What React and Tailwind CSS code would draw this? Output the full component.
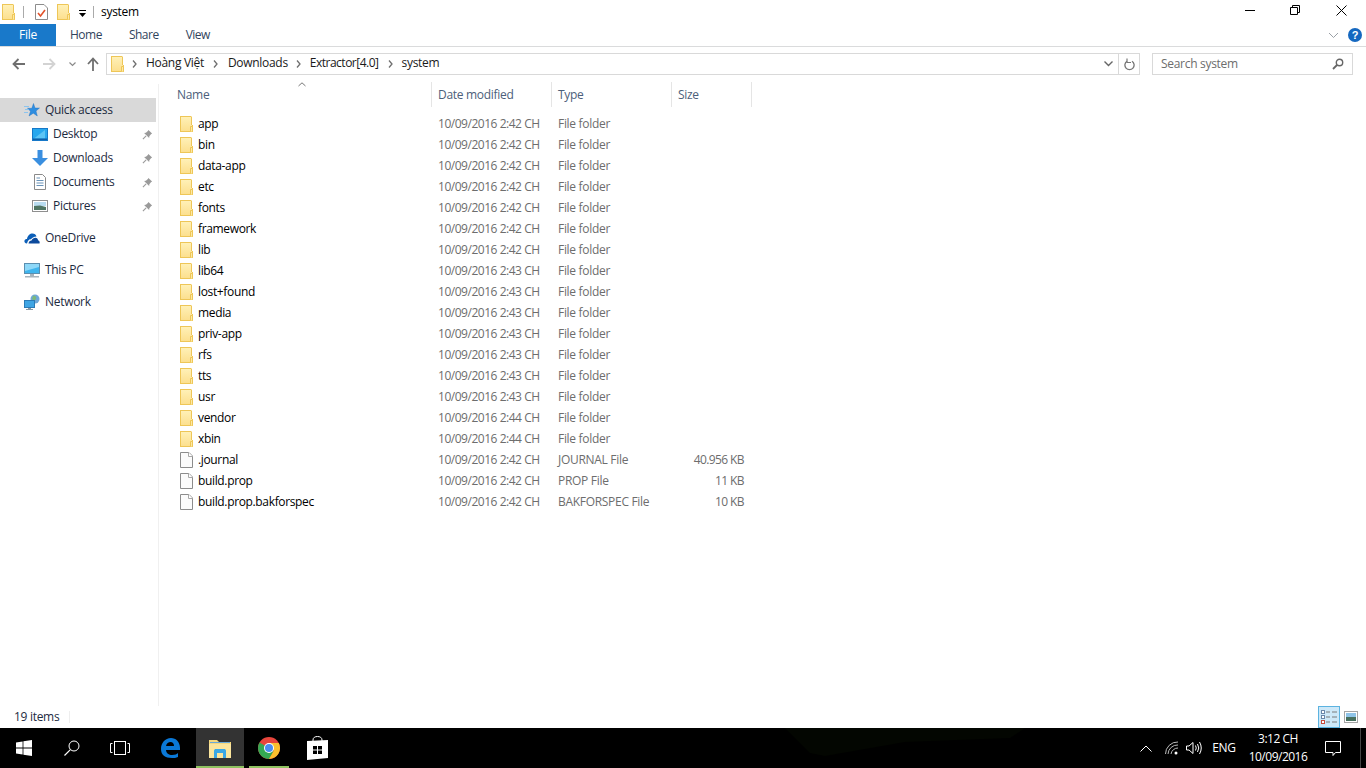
import React from "react";

const Folder = ({ className = "" }) => (
  <svg width="13" height="16" viewBox="0 0 13 16" className={className}>
    <defs>
      <linearGradient id="fg" x1="0" y1="0" x2="0" y2="1">
        <stop offset="0" stopColor="#fff1b8" />
        <stop offset="1" stopColor="#fcdf8e" />
      </linearGradient>
    </defs>
    <rect x="0.5" y="0.5" width="12" height="15" fill="url(#fg)" stroke="#eec657" />
    <rect x="11" y="0" width="2" height="9" fill="#fff" />
    <path d="M11.5 0.5V9" stroke="#eec657" />
    <path d="M10.5 15.5V10.5H12.5V15.5" fill="#fde9a4" stroke="#eec657" />
  </svg>
);

const FileIcon = () => (
  <svg width="13" height="16" viewBox="0 0 13 16">
    <path d="M0.5 0.5H9L12.5 4V15.5H0.5Z" fill="#fbfbfb" stroke="#8c8c8c" />
    <path d="M8.5 0.5V4.5H12.5" fill="#fff" stroke="#a8a8a8" />
  </svg>
);

const Pin = () => (
  <svg width="11" height="11" viewBox="0 0 12 12" className="ml-auto mr-[3px]">
    <path d="M7 1L11 5L9.8 5.6L8 7.8L7.8 9.8L2.3 4.3L4.3 4.1L6.4 2.2Z" fill="#9a9a9a" />
    <path d="M4.5 7.5L1 11" stroke="#9a9a9a" strokeWidth="1.2" />
  </svg>
);

const NavIcon = ({ type }) => {
  if (type === "star")
    return (
      <svg width="16" height="14" viewBox="0 0 16 14">
        <path d="M9.5 0.5L11 5H15.5L12 8L13.3 13L9.3 10.2L5 13L6.5 8.2L3.5 5.3H7.8Z" fill="#2f8ee0" stroke="#1f6fc0" strokeWidth="0.4" />
        <path d="M0 3.5H5M1 6.5H4.5M0 9.5H4" stroke="#8cc4ee" />
      </svg>
    );
  if (type === "desktop")
    return (
      <svg width="16" height="13" viewBox="0 0 16 13">
        <rect x="0.5" y="0.5" width="15" height="12" fill="#27a7ee" stroke="#1678c8" />
        <path d="M2 10.5L13 2V10.5Z" fill="#5cc4f5" />
        <rect x="1" y="10.5" width="14" height="1.5" fill="#0f5fa8" />
      </svg>
    );
  if (type === "down")
    return (
      <svg width="16" height="16" viewBox="0 0 16 16">
        <path d="M5.5 0H10.5V8H16L8 16L0 8H5.5Z" fill="#3a8fe0" />
      </svg>
    );
  if (type === "doc")
    return (
      <svg width="12" height="16" viewBox="0 0 12 16">
        <path d="M0.5 0.5H8.5L11.5 3.5V15.5H0.5Z" fill="#fff" stroke="#8a8a8a" />
        <path d="M2.5 4H6M2.5 6.5H9.5M2.5 9H9.5M2.5 11.5H9.5" stroke="#6a93b8" />
      </svg>
    );
  if (type === "pic")
    return (
      <svg width="16" height="12" viewBox="0 0 16 12">
        <rect x="0.5" y="0.5" width="15" height="11" fill="#fff" stroke="#8f8f8f" />
        <rect x="2" y="2" width="12" height="4" fill="#b9dcf0" />
        <path d="M2 6L8 5.5L14 7V10H2Z" fill="#4f7563" />
      </svg>
    );
  if (type === "cloud")
    return (
      <svg width="16" height="11" viewBox="0 0 16 11">
        <path d="M3 10.5C1 10.5 0 9 0.5 7.5C1 6.3 2.2 6 3 6C3.5 2.5 6 0.5 8.5 0.5C10.5 0.5 12 1.6 12.5 3.5C10 3.5 7.5 5 6.8 6.5C6 6 4 6.5 3 10.5Z" fill="#0c5fb8" />
        <path d="M4.5 10.5C4.8 8.5 6 7.5 7.5 7.5C8.5 5.5 10.5 4.5 12.3 5C13.5 5.3 14 6.5 14 7.2C15.5 7.5 16 9 15.5 10.5Z" fill="#0c4a9c" />
      </svg>
    );
  if (type === "pc")
    return (
      <svg width="16" height="15" viewBox="0 0 16 15">
        <rect x="0.5" y="0.5" width="15" height="10" fill="#3fb5ee" stroke="#5a8fb0" />
        <path d="M1 1H15V4L1 8Z" fill="#8ed8f8" />
        <rect x="6" y="11" width="4" height="2" fill="#a8b4bc" />
        <rect x="1" y="13" width="14" height="1.5" fill="#a8b4bc" />
      </svg>
    );
  return (
    <svg width="16" height="16" viewBox="0 0 16 16">
      <circle cx="11" cy="5" r="4.5" fill="#6fa8d8" />
      <path d="M9 2C11 1 13 3 12 5C11 7 9 6 8 5Z" fill="#7db97a" />
      <rect x="0.5" y="6.5" width="10" height="7" fill="#3fa5e4" stroke="#2c7bb5" />
      <rect x="4" y="14" width="3" height="1" fill="#8a9aa5" />
      <rect x="2" y="15" width="7" height="1" fill="#8a9aa5" />
    </svg>
  );
};

const SideRow = ({ icon, label, pin, indent, active, className = "" }) => (
  <div className={`flex items-center h-6 w-[156px] ${active ? "bg-[#d9d9d9]" : ""} ${className}`}>
    <span className={`flex justify-center items-center w-4 mr-[5px] ${indent ? "ml-8" : "ml-6"}`}>
      <NavIcon type={icon} />
    </span>
    <span className="text-[#1d2b3f]">{label}</span>
    {pin && <Pin />}
  </div>
);

const folders = [
  ["app", "2:42"], ["bin", "2:42"], ["data-app", "2:42"], ["etc", "2:42"], ["fonts", "2:42"],
  ["framework", "2:42"], ["lib", "2:42"], ["lib64", "2:43"], ["lost+found", "2:43"], ["media", "2:43"],
  ["priv-app", "2:43"], ["rfs", "2:43"], ["tts", "2:43"], ["usr", "2:43"], ["vendor", "2:44"], ["xbin", "2:44"],
];
const files = [
  [".journal", "JOURNAL File", "40.956 KB"],
  ["build.prop", "PROP File", "11 KB"],
  ["build.prop.bakforspec", "BAKFORSPEC File", "10 KB"],
];

const Row = ({ icon, name, time, type, size }) => (
  <div className="flex h-[21px] items-center">
    <span className="w-[37px] pl-[21px] flex items-center">{icon}</span>
    <span className="w-[240px] text-black whitespace-nowrap pl-[2px] tracking-[-0.35px]">{name}</span>
    <span className="w-[120px] text-[#6d6d6d] pl-[2px] whitespace-nowrap tracking-[-0.47px]">10/09/2016 {time} CH</span>
    <span className="w-[120px] text-[#6d6d6d] pl-[2px] whitespace-nowrap">{type}</span>
    <span className="w-[68px] text-right text-[#6d6d6d] whitespace-nowrap tracking-[-0.6px]">{size}</span>
  </div>
);

const Head = ({ w, children }) => (
  <div className={`${w} h-[25px] flex items-center pl-[6px] border-r border-[#e5e5e5] text-[#4c607a] relative`}>{children}</div>
);

function Chevron({ className = "" }) {
  return (
    <svg width="5" height="8" viewBox="0 0 5 8" className={className}>
      <path d="M1 0.5L4 4L1 7.5" fill="none" stroke="#6f6f6f" strokeWidth="1.3" />
    </svg>
  );
}

export default function App() {
  return (
    <div className="w-[1366px] h-[768px] overflow-hidden bg-white flex flex-col text-[12px] font-['Open_Sans','Noto_Sans',sans-serif] leading-none tracking-[-0.3px]">
      {/* title bar */}
      <div className="h-6 flex items-center shrink-0">
        <span className="ml-[2px] flex"><Folder /></span>
        <span className="ml-[8px] w-px h-[12px] bg-[#aaa]" />
        <svg width="13" height="16" viewBox="0 0 13 16" className="ml-[11px]">
          <path d="M0.5 0.5H9L12.5 4V15.5H0.5Z" fill="#fff" stroke="#8c8c8c" />
          <path d="M3 9L5.5 12L10 6" fill="none" stroke="#e2522a" strokeWidth="1.6" />
        </svg>
        <span className="ml-[9px] flex"><Folder /></span>
        <svg width="9" height="8" viewBox="0 0 9 8" className="ml-[8px] mt-[3px]">
          <path d="M1 0.5H8" stroke="#000" />
          <path d="M1 3H8L4.5 7Z" fill="#000" />
        </svg>
        <span className="ml-[6px] w-px h-[12px] bg-[#aaa]" />
        <span className="ml-[7px] text-black">system</span>
        <div className="ml-auto flex items-center -mt-[4px]">
          <svg width="10" height="10" viewBox="0 0 10 10" className="mr-[35px]"><path d="M0 5.5H10" stroke="#000" /></svg>
          <svg width="10" height="10" viewBox="0 0 10 10" className="mr-[36px]">
            <path d="M2.5 2.5V0.5H9.5V7.5H7.5M0.5 2.5H7.5V9.5H0.5Z" fill="none" stroke="#000" />
          </svg>
          <svg width="11" height="11" viewBox="0 0 11 11" className="mr-[19px]"><path d="M0.5 0.5L10.5 10.5M10.5 0.5L0.5 10.5" stroke="#000" /></svg>
        </div>
      </div>

      {/* ribbon */}
      <div className="h-[23px] flex items-stretch border-b border-[#dadbdc] shrink-0">
        <div className="w-14 h-[22px] bg-[#1979ca] text-white flex items-center justify-center">File</div>
        <div className="flex items-center text-[#31445c] tracking-[-0.5px]">
          <span className="ml-[14px]">Home</span>
          <span className="ml-[27px]">Share</span>
          <span className="ml-[27px]">View</span>
        </div>
        <div className="ml-auto flex items-center">
          <svg width="11" height="7" viewBox="0 0 11 7" className="mr-[9px]"><path d="M1 1L5.5 5.5L10 1" fill="none" stroke="#9aa0a6" /></svg>
          <svg width="14" height="14" viewBox="0 0 14 14" className="mr-[4px]">
            <circle cx="7" cy="7" r="7" fill="#1568c0" />
            <text x="7" y="11" textAnchor="middle" fontSize="11" fontWeight="700" fill="#fff" fontFamily="Liberation Sans">?</text>
          </svg>
        </div>
      </div>

      {/* nav */}
      <div className="h-[37px] flex items-center shrink-0 pb-[3px]">
        <svg width="14" height="12" viewBox="0 0 14 12" className="ml-[12px]"><path d="M13 6H2M6.5 1L1.5 6L6.5 11" fill="none" stroke="#6f6f6f" strokeWidth="1.8" /></svg>
        <svg width="14" height="12" viewBox="0 0 14 12" className="ml-[16px]"><path d="M1 6H12M7.5 1L12.5 6L7.5 11" fill="none" stroke="#d3d3d3" strokeWidth="1.8" /></svg>
        <svg width="7" height="5" viewBox="0 0 7 5" className="ml-[13px]"><path d="M0.5 0.5L3.5 3.5L6.5 0.5" fill="none" stroke="#8a8a8a" strokeWidth="1.2" /></svg>
        <svg width="12" height="14" viewBox="0 0 12 14" className="ml-[11px]"><path d="M6 14V2M1 7L6 1.5L11 7" fill="none" stroke="#6f6f6f" strokeWidth="1.8" /></svg>
        <div className="ml-[7px] w-[1034px] h-[22px] border border-[#d9d9d9] flex items-center">
          <span className="ml-[4px] flex"><Folder /></span>
          <Chevron className="ml-[8px]" />
          <span className="ml-[9px] pb-[2px] text-[#1a1a1a]">Hoàng Việt</span>
          <Chevron className="ml-[9px]" />
          <span className="ml-[10px] pb-[2px] text-[#1a1a1a]">Downloads</span>
          <Chevron className="ml-[8px]" />
          <span className="ml-[9px] pb-[2px] text-[#1a1a1a] tracking-[-0.5px]">Extractor[4.0]</span>
          <Chevron className="ml-[9px]" />
          <span className="ml-[9px] pb-[2px] text-[#1a1a1a]">system</span>
          <div className="ml-auto flex items-center h-full">
            <svg width="9" height="6" viewBox="0 0 9 6" className="mr-[5px]"><path d="M0.5 0.5L4.5 4.5L8.5 0.5" fill="none" stroke="#666" strokeWidth="1.4" /></svg>
            <div className="w-[21px] h-full border-l border-[#d9d9d9] flex items-center justify-center">
              <svg width="11" height="13" viewBox="0 0 11 13">
                <path d="M3 3.2A4.6 4.6 0 1 0 8 3.2" fill="none" stroke="#777" strokeWidth="1.3" />
                <path d="M3 0.5V4.5H7" fill="none" stroke="#777" strokeWidth="1.2" />
              </svg>
            </div>
          </div>
        </div>
        <div className="ml-[12px] w-[201px] h-[22px] border border-[#d9d9d9] flex items-center pl-2 pr-[8px] text-[#6d6d6d]">
          <span>Search system</span>
          <svg width="12" height="12" viewBox="0 0 12 12" className="ml-auto">
            <circle cx="7.5" cy="4.5" r="3.2" fill="none" stroke="#666" strokeWidth="1.4" />
            <path d="M5 7L1 11" stroke="#666" strokeWidth="1.8" />
          </svg>
        </div>
      </div>

      {/* main */}
      <div className="flex-1 flex min-h-0">
        <div className="w-[159px] border-r border-[#f0f0f0] pt-[14px] shrink-0">
          <SideRow icon="star" label="Quick access" active />
          <SideRow icon="desktop" label="Desktop" pin indent />
          <SideRow icon="down" label="Downloads" pin indent />
          <SideRow icon="doc" label="Documents" pin indent />
          <SideRow icon="pic" label="Pictures" pin indent />
          <SideRow icon="cloud" label="OneDrive" className="mt-2" />
          <SideRow icon="pc" label="This PC" className="mt-2" />
          <SideRow icon="net" label="Network" className="mt-2" />
        </div>
        <div className="flex-1">
          <div className="flex -mt-[2px]">
            <Head w="w-[273px]">
              <span className="ml-[12px]">Name</span>
              <svg width="8" height="5" viewBox="0 0 8 5" className="absolute left-[139px] top-0"><path d="M0.5 4L4 0.8L7.5 4" fill="none" stroke="#777" /></svg>
            </Head>
            <Head w="w-[120px]">Date modified</Head>
            <Head w="w-[120px]">Type</Head>
            <Head w="w-[80px]">Size</Head>
          </div>
          <div className="mt-[6px]">
            {folders.map(([n, t]) => (
              <Row key={n} icon={<Folder />} name={n} time={t} type="File folder" />
            ))}
            {files.map(([n, ty, s]) => (
              <Row key={n} icon={<FileIcon />} name={n} time="2:42" type={ty} size={s} />
            ))}
          </div>
        </div>
      </div>

      {/* status */}
      <div className="h-[22px] flex items-center shrink-0 relative">
        <span className="ml-[14px] text-[#1d2b3f]">19 items</span>
        <span className="ml-[10px] w-px h-[12px] bg-[#eeeeee]" />
        <div className="ml-auto flex items-center h-full">
          <div className="w-[22px] h-[22px] bg-[#cde8f8] border border-[#5cb3e0] flex items-center justify-center">
            <svg width="16" height="14" viewBox="0 0 16 14">
              <rect x="0.5" y="0.5" width="3" height="3" fill="#fff" stroke="#6a86a8" />
              <rect x="0.5" y="5.5" width="3" height="3" fill="#fff" stroke="#6a86a8" />
              <rect x="0.5" y="10.5" width="3" height="3" fill="#fff" stroke="#c84a3a" />
              <path d="M5 2H9M11 2H16M5 7H9M11 7H16M5 12H9M11 12H16" stroke="#7a7a7a" />
            </svg>
          </div>
          <svg width="14" height="12" viewBox="0 0 14 12" className="ml-[4px] mr-[8px]">
            <rect x="0.5" y="0.5" width="13" height="11" fill="#fff" stroke="#a5a5a5" />
            <rect x="2" y="2" width="10" height="4" fill="#8fc4e8" />
            <rect x="2" y="6" width="10" height="4" fill="#47705e" />
          </svg>
        </div>
      </div>

      {/* taskbar */}
      <div className="h-10 bg-black flex items-stretch shrink-0 relative text-white">
        <svg width="250" height="28" viewBox="0 0 250 28" className="absolute left-[785px] top-0">
          <path d="M0 0H240L225 10L120 14L40 28L25 25Z" fill="#030601" />
        </svg>
        <div className="w-12 flex items-center justify-center relative">
          <svg width="16" height="16" viewBox="0 0 16 16"><path d="M0 2.4L6.6 1.4V7.6H0ZM7.4 1.3L16 0V7.6H7.4ZM0 8.4H6.6V14.6L0 13.6ZM7.4 8.4H16V16L7.4 14.7Z" fill="#fff" /></svg>
        </div>
        <div className="w-12 flex items-center justify-center relative">
          <svg width="16" height="16" viewBox="0 0 16 16"><circle cx="10" cy="6" r="5" fill="none" stroke="#fff" /><path d="M6.4 9.6L0.5 15.5" stroke="#fff" strokeWidth="1.2" /></svg>
        </div>
        <div className="w-12 flex items-center justify-center relative">
          <svg width="20" height="14" viewBox="0 0 20 14"><rect x="4.5" y="0.5" width="11" height="13" fill="none" stroke="#fff" /><path d="M2.5 2.5H0.5V11.5H2.5M17.5 2.5H19.5V11.5H17.5" fill="none" stroke="#fff" /></svg>
        </div>
        <div className="w-[52px] flex items-center justify-center relative">
          <svg width="20" height="20" viewBox="0 0 20 20">
            <path d="M1 11C1 5 5 0 11 0C16 0 20 4 20 10V12H6C6 15 9 17 12 17C15 17 17 16 18 15V19C16 20 14 20 12 20C5 20 1 17 1 11ZM6 8H14C14 5.5 12.5 4 10.5 4C8.5 4 6.5 5.5 6 8Z" fill="#0a78d7" />
          </svg>
        </div>
        <div className="w-12 bg-[#333333] flex items-center justify-center relative">
          <svg width="22" height="19" viewBox="0 0 22 19">
            <path d="M0 1H8L10 3H22V19H0Z" fill="#f4d77e" />
            <path d="M1 3H21V4H1Z" fill="#6aa9d8" />
            <path d="M0 5H22V19H0Z" fill="#fbe59c" />
            <path d="M5 19V12C5 10.5 6 10 7 10H15C16 10 17 10.5 17 12V19H14V14H8V19Z" fill="#3aa7e4" />
          </svg>
          <span className="absolute bottom-0 inset-x-0 h-[2px] bg-[#8fc261]" />
        </div>
        <div className="w-12 ml-px flex items-center justify-center relative">
          <svg width="22" height="22" viewBox="0 0 22 22">
            <circle cx="11" cy="11" r="11" fill="#e8453c" />
            <path d="M11 11L1.5 5.5A11 11 0 0 0 11 22L15.8 13.8Z" fill="#34a853" />
            <path d="M11 6H20.8A11 11 0 0 1 11 22L15.8 13.8Z" fill="#fbc02d" />
            <circle cx="11" cy="11" r="5" fill="#fff" />
            <circle cx="11" cy="11" r="4" fill="#4a8cf0" />
          </svg>
          <span className="absolute bottom-0 left-[4px] right-[4px] h-[2px] bg-[#8fc261]" />
        </div>
        <div className="w-12 flex items-center justify-center relative">
          <svg width="21" height="24" viewBox="0 0 21 24">
            <path d="M6 6V4C6 1.5 8 0.5 10.5 0.5C13 0.5 15 1.5 15 4V6" fill="none" stroke="#fff" />
            <path d="M0 5L21 4V22L0 24Z" fill="#fff" />
            <path d="M6 10H10V13.5H6ZM11 10H15V13.5H11ZM6 14.5H10V18H6ZM11 14.5H15V18H11Z" fill="#000" />
          </svg>
        </div>
        <div className="ml-auto flex items-center relative">
          <svg width="12" height="7" viewBox="0 0 12 7" className="mr-[13px]"><path d="M0.5 6.5L6 1L11.5 6.5" fill="none" stroke="#fff" /></svg>
          <svg width="14" height="14" viewBox="0 0 14 14" className="mr-[7px]">
            <path d="M0.5 13A12 12 0 0 1 13 1M3 13A9.5 9.5 0 0 1 13 4M6 13A7 7 0 0 1 13 7" fill="none" stroke="#bbb" />
            <circle cx="11" cy="12" r="1.5" fill="#fff" />
          </svg>
          <svg width="16" height="14" viewBox="0 0 16 14" className="mr-[10px]">
            <path d="M0.5 5H3L7 1.5V12.5L3 9H0.5Z" fill="none" stroke="#fff" />
            <path d="M9.5 4.5Q11 7 9.5 9.5M11.5 3Q14 7 11.5 11M13.5 1Q17 7 13.5 13" fill="none" stroke="#fff" />
          </svg>
          <span className="w-[24px] mr-[9px] text-center">ENG</span>
          <div className="w-[66px] text-center leading-[18px] mr-[14px] tracking-[-0.5px]">
            <div>3:12 CH</div>
            <div>10/09/2016</div>
          </div>
          <svg width="16" height="15" viewBox="0 0 16 15" className="mr-[25px]">
            <path d="M0.5 0.5H15.5V11.5H10.5L8 14.5V11.5H0.5Z" fill="none" stroke="#fff" />
          </svg>
        </div>
        <span className="absolute right-[5px] inset-y-0 w-px bg-[#444]" />
      </div>
    </div>
  );
}
